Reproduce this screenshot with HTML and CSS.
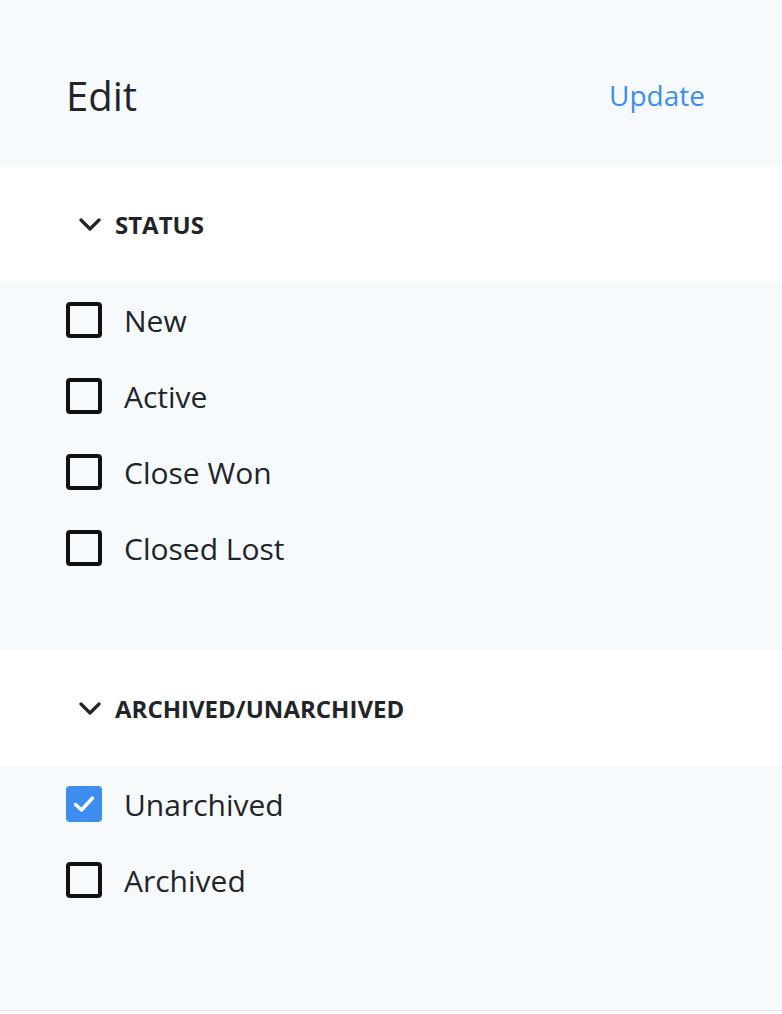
FILE: index.html
```html
<!DOCTYPE html>
<html lang="en">
<head>
    <meta charset="UTF-8">
    <meta name="viewport" content="width=device-width, initial-scale=1.0">
    <title>Edit filters</title>
    <link rel="stylesheet" href="styles.css">
</head>
<body>
    <header class="top">
        <h1>Edit</h1>
        <a href="#" class="update">Update</a>
    </header>

    <section class="group">
        <div class="group-head">
            <svg class="chevron" width="22" height="14" viewBox="0 0 22 14"><path d="M2 2 L11 11 L20 2" fill="none" stroke="#212529" stroke-width="3.2" stroke-linecap="round" stroke-linejoin="round"/></svg>
            <span>STATUS</span>
        </div>
        <ul class="options">
            <li><span class="box"></span>New</li>
            <li><span class="box"></span>Active</li>
            <li><span class="box"></span>Close Won</li>
            <li><span class="box"></span>Closed Lost</li>
        </ul>
    </section>

    <section class="group last">
        <div class="group-head">
            <svg class="chevron" width="22" height="14" viewBox="0 0 22 14"><path d="M2 2 L11 11 L20 2" fill="none" stroke="#212529" stroke-width="3.2" stroke-linecap="round" stroke-linejoin="round"/></svg>
            <span>ARCHIVED/UNARCHIVED</span>
        </div>
        <ul class="options">
            <li><span class="box checked"><svg width="24" height="20" viewBox="0 0 24 20"><path d="M3.5 10.5 L9.5 16 L20.5 4" fill="none" stroke="#fff" stroke-width="3.4" stroke-linecap="round" stroke-linejoin="round"/></svg></span>Unarchived</li>
            <li><span class="box"></span>Archived</li>
        </ul>
    </section>
</body>
</html>
```

FILE: styles.css
```css
body {
    margin: 0;
    font-family: "Open Sans", "Noto Sans", sans-serif;
    color: #212529;
    background: #f7fafd;
}
.top {
    height: 166px;
    display: flex;
    align-items: center;
    justify-content: space-between;
    padding: 24px 77px 0 66px;
    box-sizing: border-box;
    background: #f7fafd;
}
.top h1 {
    margin: 0;
    font-size: 40px;
    font-weight: 400;
}
.update {
    color: #3d8ef0;
    text-decoration: none;
    font-size: 28px;
}
.group-head {
    height: 116px;
    background: #fff;
    display: flex;
    align-items: center;
    padding-left: 79px;
    font-size: 24px;
    font-weight: 700;
}
.chevron {
    margin-right: 14px;
    margin-top: 1px;
}
.options {
    list-style: none;
    margin: 0;
    padding: 0 0 64px 0;
}
.last .options {
    padding-bottom: 92px;
    border-bottom: 1px solid #e6e9ec;
}
.options li {
    height: 76px;
    display: flex;
    align-items: center;
    padding-left: 66px;
    font-size: 30px;
}
.box {
    width: 36px;
    height: 36px;
    box-sizing: border-box;
    border: 4px solid #111;
    border-radius: 4px;
    margin-right: 22px;
    display: flex;
    align-items: center;
    justify-content: center;
}
.box.checked {
    border: none;
    background: #3d8ef0;
}
```
